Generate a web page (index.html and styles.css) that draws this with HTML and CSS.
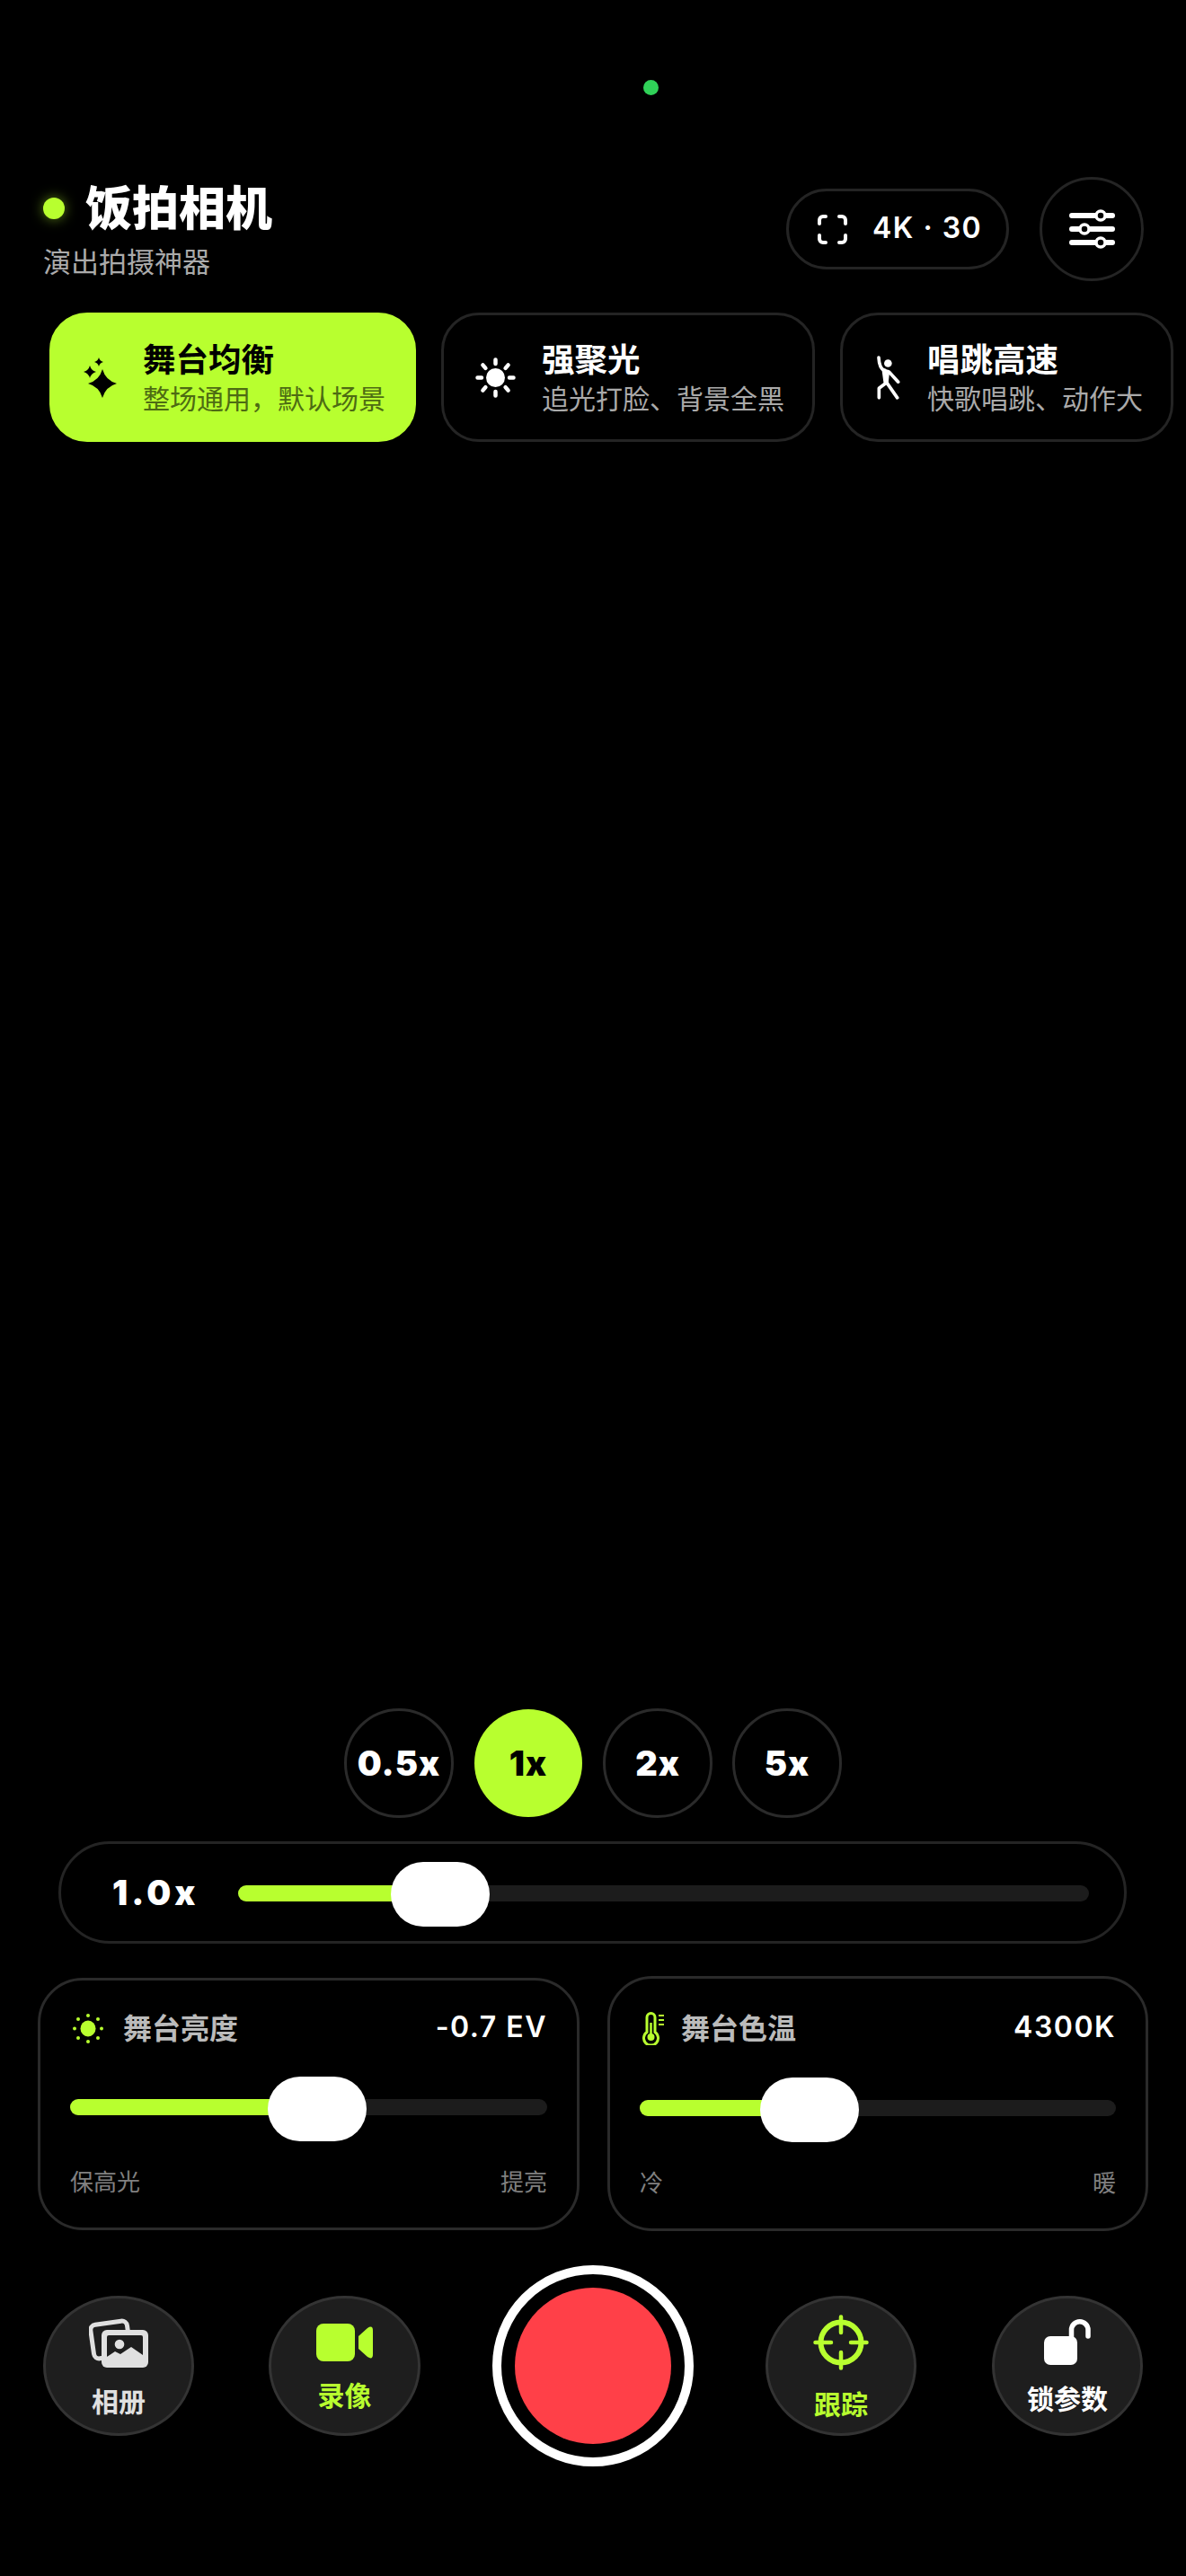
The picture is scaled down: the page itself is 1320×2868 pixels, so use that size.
FILE: index.html
```html
<!DOCTYPE html>
<html lang="zh-CN">
<head>
  <meta charset="UTF-8" />
  <meta name="viewport" content="width=device-width, initial-scale=1.0"/>
  <title>饭拍相机</title>
  <link rel="stylesheet" href="styles.css">
</head>
<body>

<div class="camera-dot"></div>

<header class="top-bar">
  <div class="brand">
    <div class="brand-title"><span class="brand-dot"></span><h1>饭拍相机</h1></div>
    <p class="brand-sub">演出拍摄神器</p>
  </div>
  <div class="res-pill">
    <svg width="33" height="33" viewBox="0 0 33 33" fill="none" stroke="#fff" stroke-width="4" stroke-linecap="round" stroke-linejoin="round">
      <path d="M2 10V6a4 4 0 0 1 4-4h3M24 2h3a4 4 0 0 1 4 4v4M31 23v4a4 4 0 0 1-4 4h-3M9 31H6a4 4 0 0 1-4-4v-4"/>
    </svg>
    <span>4K · 30</span>
  </div>
  <button class="settings-btn">
    <svg width="51" height="44" viewBox="0 0 51 44" fill="none" stroke="#fff" stroke-linecap="round">
      <path d="M3 7h45M3 22h45M3 37h45" stroke-width="6"/>
      <circle cx="35" cy="7" r="5" fill="#000" stroke-width="3.5"/>
      <circle cx="17" cy="22" r="5" fill="#000" stroke-width="3.5"/>
      <circle cx="35" cy="37" r="5" fill="#000" stroke-width="3.5"/>
    </svg>
  </button>
</header>

<section class="modes">
  <div class="mode mode-active">
    <svg class="mode-icon" width="37" height="45" viewBox="0 0 37 45" fill="#000">
      <path d="M21 13Q24.500 25.500 37 29Q24.500 32.500 21 45Q17.500 32.500 5 29Q17.500 25.500 21 13Z"/>
      <path d="M7 9Q8.500 14.500 14 16Q8.500 17.500 7 23Q5.500 17.500 0 16Q5.500 14.500 7 9Z"/>
      <path d="M17 0Q18 4 22 5Q18 6 17 10Q16 6 12 5Q16 4 17 0Z"/>
    </svg>
    <div class="mode-text"><strong>舞台均衡</strong><small>整场通用，默认场景</small></div>
  </div>
  <div class="mode">
    <svg class="mode-icon" width="45" height="45" viewBox="0 0 45 45" fill="#fff" stroke="#fff" stroke-linecap="round">
      <circle cx="22.5" cy="22.5" r="10.5" stroke="none"/>
      <path stroke-width="4.5" d="M22.5 2.5v4.5M22.5 38v4.5M2.5 22.5H7M38 22.5h4.500M8.400 8.400l3 3.500M33.600 33.100l3 3.500M36.600 8.400l-3 3.500M11.400 33.100l-3 3.500"/>
    </svg>
    <div class="mode-text"><strong>强聚光</strong><small>追光打脸、背景全黑</small></div>
  </div>
  <div class="mode mode-last">
    <svg class="mode-icon" width="26" height="49" viewBox="105 78 78 146" fill="none" stroke="#fff" stroke-width="11" stroke-linecap="round" stroke-linejoin="round">
      <circle cx="142" cy="103" r="13" fill="#fff" stroke="none"/>
      <path d="M111 84C112 105 118 122 130 128L142 130L138 165"/>
      <path d="M130 128L135 165" stroke-width="16"/>
      <path d="M146 132L176 165"/>
      <path d="M136 168L112 186V218M138 168L173 218"/>
    </svg>
    <div class="mode-text"><strong>唱跳高速</strong><small>快歌唱跳、动作大</small></div>
  </div>
</section>

<div class="viewfinder"></div>

<div class="zoom-row">
  <button class="zoom-btn">0.5x</button>
  <button class="zoom-btn zoom-active">1x</button>
  <button class="zoom-btn">2x</button>
  <button class="zoom-btn">5x</button>
</div>

<div class="zoom-slider">
  <span class="zoom-value">1.0x</span>
  <div class="slider">
    <div class="track"><div class="fill" style="width: 180px"></div></div>
    <div class="thumb" style="left: 170px"></div>
  </div>
</div>

<section class="cards">
  <div class="card">
    <div class="card-head">
      <svg class="card-icon icon-sun" width="34" height="33" viewBox="0 0 34 33" fill="#b8ff2f">
        <ellipse cx="17" cy="16.500" rx="8.500" ry="9"/>
        <circle cx="17" cy="2" r="2"/><circle cx="17" cy="31" r="2"/>
        <circle cx="2" cy="16.500" r="2"/><circle cx="32" cy="16.500" r="2"/>
        <circle cx="6" cy="6" r="2"/><circle cx="28" cy="6" r="2"/>
        <circle cx="6" cy="27" r="2"/><circle cx="28" cy="27" r="2"/>
      </svg>
      <span class="card-label">舞台亮度</span>
      <span class="card-value">-0.7 EV</span>
    </div>
    <div class="slider">
      <div class="track"><div class="fill" style="width: 240px"></div></div>
      <div class="thumb" style="left: 220px"></div>
    </div>
    <div class="card-foot"><span>保高光</span><span>提亮</span></div>
  </div>
  <div class="card">
    <div class="card-head">
      <svg class="card-icon" width="24" height="37" viewBox="0 0 24 37" fill="none" stroke="#b8ff2f">
        <path stroke-width="3" d="M5 22.500V6a4.500 4.500 0 0 1 9 0v16.500a8 8 0 1 1-9 0Z"/>
        <circle cx="9.500" cy="28" r="4" fill="#b8ff2f" stroke="none"/>
        <path stroke-width="2.500" d="M9.500 12v14"/>
        <path stroke-width="2" d="M18 4h6M18 9h6M18 14h6"/>
      </svg>
      <span class="card-label">舞台色温</span>
      <span class="card-value">4300K</span>
    </div>
    <div class="slider">
      <div class="track"><div class="fill" style="width: 155px"></div></div>
      <div class="thumb" style="left: 134px"></div>
    </div>
    <div class="card-foot"><span>冷</span><span>暖</span></div>
  </div>
</section>

<nav class="actions">
  <button class="action">
    <svg width="66" height="56" viewBox="0 0 66 56">
      <rect x="3.500" y="6" width="41" height="38" rx="6" fill="none" stroke="#e0e0e0" stroke-width="5" transform="rotate(-8 24 25)"/>
      <rect x="14" y="14" width="52" height="42" rx="6" fill="#e0e0e0"/>
      <rect x="20" y="20" width="40" height="25" rx="2" fill="#1e1e1e"/>
      <circle cx="34" cy="30" r="5.300" fill="#e0e0e0"/>
      <path d="M20 44L29 38L35 41L47 33L60 42V50H20Z" fill="#e0e0e0"/>
    </svg>
    <span>相册</span>
  </button>
  <button class="action action-lime action-video">
    <svg width="63" height="42" viewBox="0 0 63 42" fill="#b8ff2f">
      <rect width="43" height="42" rx="8"/>
      <path d="M47 14L57 5Q63 1 63 8V34Q63 41 57 37L47 28Z"/>
    </svg>
    <span>录像</span>
  </button>
  <button class="shutter"><span class="shutter-core"></span></button>
  <button class="action action-lime">
    <svg width="62" height="62" viewBox="0 0 62 62" fill="none" stroke="#b8ff2f" stroke-linecap="round">
      <circle cx="31" cy="31" r="22.500" stroke-width="6"/>
      <path stroke-width="4.500" d="M31 2.500V20M31 42V59.500M2.500 31H20M42 31H59.500"/>
    </svg>
    <span>跟踪</span>
  </button>
  <button class="action action-white">
    <svg width="52" height="51" viewBox="0 0 52 51">
      <rect y="19" width="37" height="32" rx="7" fill="#fff"/>
      <path d="M30.500 21V12a9 9 0 0 1 18.500 0v7" fill="none" stroke="#fff" stroke-width="5.500" stroke-linecap="round"/>
    </svg>
    <span>锁参数</span>
  </button>
</nav>

</body>
</html>
```
FILE: styles.css
```css
* {
  box-sizing: border-box;
}

html, body {
  height: 100%;
}

body {
  margin: 0;
  background: #000;
  color: #fff;
  font-family: Inter, "Noto Sans CJK SC", sans-serif;
  display: flex;
  flex-direction: column;
  padding: 89px 0 122px;
  overflow: hidden;
}

button {
  font-family: inherit;
  padding: 0;
  color: inherit;
  background: none;
}

.camera-dot {
  width: 17px;
  height: 17px;
  border-radius: 50%;
  background: #30d158;
  margin-left: 716px;
}

/* header */
.top-bar {
  display: flex;
  align-items: center;
  height: 116px;
  margin-top: 91px;
  padding: 0 47px 0 48px;
}

.brand {
  align-self: flex-start;
  margin-top: 6px;
  margin-right: auto;
  font-family: "Noto Sans CJK SC", sans-serif;
}

.brand-title {
  display: flex;
  align-items: center;
  gap: 23px;
}

.brand-dot {
  width: 24px;
  height: 24px;
  border-radius: 50%;
  background: #b8ff2f;
  box-shadow: 0 0 14px rgba(184, 255, 47, 0.5);
  margin-top: 6px;
}

.brand-title h1 {
  margin: 0;
  font-size: 52px;
  line-height: 52px;
  font-weight: 900;
}

.brand-sub {
  margin: 19px 0 0;
  font-size: 31px;
  line-height: 32px;
  color: #aaa;
}

.res-pill {
  width: 248px;
  height: 90px;
  border: 3px solid #242424;
  border-radius: 45px;
  display: flex;
  align-items: center;
  gap: 28px;
  padding-left: 32px;
  margin-right: 34px;
  font-size: 32px;
  font-weight: 600;
  letter-spacing: 1.5px;
  white-space: nowrap;
}

.res-pill span {
  padding-bottom: 3px;
}

.settings-btn {
  width: 116px;
  height: 116px;
  border: 3px solid #242424;
  border-radius: 50%;
  display: flex;
  align-items: center;
  justify-content: center;
}

/* scene chips */
.modes {
  display: flex;
  gap: 28px;
  margin-top: 35px;
  padding-left: 55px;
  font-family: "Noto Sans CJK SC", sans-serif;
}

.mode {
  height: 144px;
  border: 3px solid #242424;
  border-radius: 42px;
  display: flex;
  align-items: center;
  gap: 29px;
  padding: 0 31px 0 35px;
  white-space: nowrap;
}

.mode-active {
  background: #b8ff2f;
  border-color: #b8ff2f;
  color: #000;
}

.mode-last {
  padding-left: 38px;
  gap: 30px;
}

.mode-icon {
  flex: none;
}

.mode-text {
  padding-bottom: 4px;
}

.mode-text strong {
  display: block;
  font-size: 36.500px;
  line-height: 40px;
  font-weight: 700;
}

.mode-text small {
  display: block;
  margin-top: 7px;
  font-size: 30px;
  line-height: 32px;
  color: #aaa;
}

.mode-active small {
  color: #4d6b13;
}

.viewfinder {
  flex: 1;
}

/* zoom */
.zoom-row {
  display: flex;
  justify-content: center;
  gap: 22px;
}

.zoom-btn {
  width: 122px;
  height: 122px;
  border: 3px solid #2a2a2a;
  border-radius: 50%;
  font-size: 38px;
  font-weight: 900;
  letter-spacing: 1px;
}

.zoom-active {
  border: 1px solid transparent;
  background: #b8ff2f;
  background-clip: padding-box;
  color: #000;
}

.zoom-slider {
  height: 114px;
  margin: 26px 66px 0 65px;
  border: 3px solid #242424;
  border-radius: 57px;
  display: flex;
  align-items: center;
  padding: 0 39px 0 57px;
}

.zoom-value {
  flex: none;
  width: 140px;
  font-size: 38px;
  font-weight: 900;
  letter-spacing: 4px;
}

.slider {
  position: relative;
  flex: 1;
  height: 72px;
}

.track {
  position: absolute;
  top: 25px;
  left: 0;
  right: 0;
  height: 18px;
  border-radius: 9px;
  background: #1c1c1c;
  overflow: hidden;
}

.zoom-slider .track {
  top: 28px;
}

.fill {
  height: 100%;
  background: #b8ff2f;
}

.thumb {
  position: absolute;
  top: 0;
  width: 110px;
  height: 72px;
  border-radius: 36px;
  background: #fff;
}

.zoom-slider .thumb {
  top: 2px;
}

/* brightness and temperature */
.cards {
  display: grid;
  grid-template-columns: 603px 602px;
  gap: 31px;
  align-items: center;
  margin-top: 36px;
  padding: 0 42px;
}

.card {
  border: 3px solid #2a2a2a;
  border-radius: 50px;
  padding: 37px 33px;
}

.card-head {
  display: flex;
  align-items: center;
  margin-bottom: 36px;
}

.card-icon {
  margin: 0 19px 0 3px;
}

.card-icon.icon-sun {
  margin-right: 22px;
}

.card-label {
  font-family: "Noto Sans CJK SC", sans-serif;
  font-size: 32px;
  line-height: 28px;
  padding-bottom: 6px;
  font-weight: 700;
  color: #bbb;
}

.card-value {
  margin-left: auto;
  font-size: 32px;
  line-height: 30px;
  padding-bottom: 4px;
  font-weight: 600;
  letter-spacing: 1.5px;
}

.card-foot {
  display: flex;
  justify-content: space-between;
  margin: 31px 0 2px;
  font-family: "Noto Sans CJK SC", sans-serif;
  font-size: 26px;
  line-height: 26px;
  color: #808080;
}

/* bottom actions */
.actions {
  display: flex;
  align-items: center;
  gap: 80px;
  margin-top: 38px;
  padding: 0 48px;
}

.action {
  width: 168px;
  height: 156px;
  flex: none;
  border: 3px solid #333;
  border-radius: 50%;
  background: #1e1e1e;
  display: flex;
  flex-direction: column;
  align-items: center;
  justify-content: center;
  gap: 21px;
  padding-bottom: 2px;
  font-family: "Noto Sans CJK SC", sans-serif;
  font-size: 30px;
  line-height: 30px;
  font-weight: 700;
  color: #e0e0e0;
}

.action:first-child {
  margin-right: 3px;
}

.action:last-child {
  margin-left: 4px;
}

.action-video {
  width: 169px;
}

.action-lime {
  color: #b8ff2f;
}

.action-white {
  color: #fff;
}

.shutter {
  width: 224px;
  height: 224px;
  flex: none;
  border: 10px solid #fff;
  border-radius: 50%;
  display: flex;
  align-items: center;
  justify-content: center;
}

.shutter-core {
  width: 174px;
  height: 174px;
  border-radius: 50%;
  background: #ff4048;
}
```
